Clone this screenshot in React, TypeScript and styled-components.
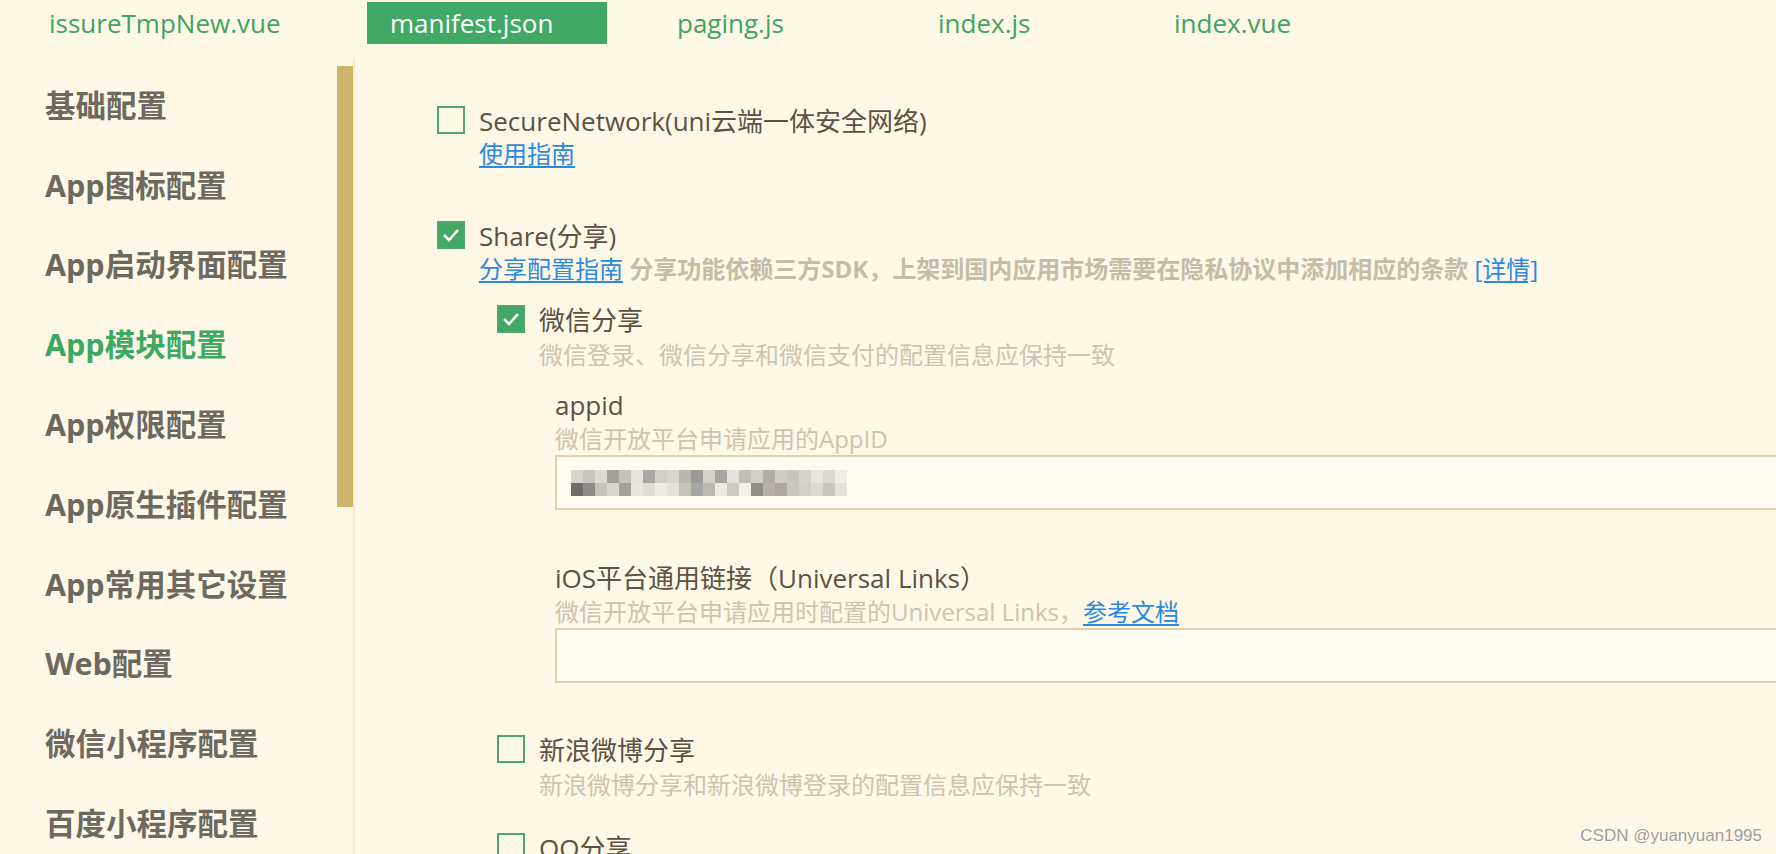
import React from 'react'
import styled, { createGlobalStyle } from 'styled-components'

const GlobalStyle = createGlobalStyle`
  html, body {
    margin: 0;
    padding: 0;
    background: #fff8e6;
  }
  body {
    font-family: 'Open Sans', 'Noto Sans CJK SC', sans-serif;
  }
`

const tabs = [
  { name: 'issureTmpNew.vue', width: 300, space: 41 },
  { name: 'manifest.json', width: 240, space: 47, active: true },
  { name: 'paging.js', width: 240, space: 21 },
  { name: 'index.js', width: 236, space: 0 },
  { name: 'index.vue', width: 240, space: 0 },
]

const menu = [
  '基础配置',
  'App图标配置',
  'App启动界面配置',
  'App模块配置',
  'App权限配置',
  'App原生插件配置',
  'App常用其它设置',
  'Web配置',
  '微信小程序配置',
  '百度小程序配置',
]

// blurred appid, two rows of mosaic cells
const mosaic = [
  ['#d8d5cd', '#c9c6bd', '#dedbd3', '#a3a09a', '#c5c2ba', '#e5e3dc', '#a9a7a2', '#d2cfc7', '#d9d6cf', '#b9b6af', '#9c9a95', '#d6d3cb', '#a6a4a0', '#e3e1da', '#c1beb7', '#d4cfc5', '#b2aea7', '#cfccc5', '#c8c5be', '#d6d3cc', '#e8e5dc', '#ddd9d0', '#f1eee5'],
  ['#6f6d6a', '#8e8b86', '#c6c3bb', '#d9d6ce', '#a5a29d', '#e8e6df', '#dfddd5', '#eeebe3', '#e4e2dc', '#c7c4bc', '#a3a5a6', '#bcb9b2', '#edeae2', '#cdcac2', '#f4f1e8', '#8f8d89', '#b5b2ab', '#b0a89f', '#c9c6bf', '#d3d0c8', '#ddd9d0', '#c8c5be', '#e6e3da'],
]

export default function App() {
  return (
    <Page>
      <GlobalStyle />
      <TabBar>
        {tabs.map((tab) => (
          <Tab key={tab.name} $width={tab.width} $space={tab.space} $active={!!tab.active}>
            {tab.name}
          </Tab>
        ))}
      </TabBar>

      <Main>
        <Sidebar>
          <Nav>
            {menu.map((item) => (
              <NavItem key={item} $active={item === 'App模块配置'}>
                {item}
              </NavItem>
            ))}
          </Nav>
          <ScrollTrack>
            <Thumb />
          </ScrollTrack>
        </Sidebar>

        <Content>
          <Option $space={49}>
            <Checkbox $checked={false} />
            <OptionBody>
              <Label>SecureNetwork(uni云端一体安全网络)</Label>
              <Hint>
                <Link>使用指南</Link>
              </Hint>
            </OptionBody>
          </Option>

          <Option $space={0}>
            <Checkbox $checked>
              <CheckMark />
            </Checkbox>
            <OptionBody>
              <Label>Share(分享)</Label>
              <Hint>
                <Link>分享配置指南</Link> <Notice>分享功能依赖三方SDK，上架到国内应用市场需要在隐私协议中添加相应的条款</Notice>{' '}
                <Link>[详情]</Link>
              </Hint>

              <SubList>
                <Option $space={30}>
                  <Checkbox $checked>
                    <CheckMark />
                  </Checkbox>
                  <OptionBody>
                    <Label>微信分享</Label>
                    <Desc>微信登录、微信分享和微信支付的配置信息应保持一致</Desc>
                    <Fields>
                      <Field>
                        <Label>appid</Label>
                        <FieldHint>微信开放平台申请应用的AppID</FieldHint>
                        <InputBox>
                          <Mosaic />
                        </InputBox>
                      </Field>
                      <Field>
                        <Label>iOS平台通用链接（Universal Links）</Label>
                        <FieldHint>
                          微信开放平台申请应用时配置的Universal Links，<Link>参考文档</Link>
                        </FieldHint>
                        <InputBox />
                      </Field>
                    </Fields>
                  </OptionBody>
                </Option>

                <Option $space={30}>
                  <Checkbox $checked={false} />
                  <OptionBody>
                    <Label>新浪微博分享</Label>
                    <Desc>新浪微博分享和新浪微博登录的配置信息应保持一致</Desc>
                  </OptionBody>
                </Option>

                <Option $space={0}>
                  <Checkbox $checked={false} />
                  <OptionBody>
                    <Label>QQ分享</Label>
                  </OptionBody>
                </Option>
              </SubList>
            </OptionBody>
          </Option>
        </Content>
      </Main>

      <Watermark>CSDN @yuanyuan1995</Watermark>
    </Page>
  )
}

function CheckMark() {
  return (
    <svg width="18" height="14" viewBox="0 0 18 14">
      <polyline points="2,7 7,12 16,2" fill="none" stroke="#fff" strokeWidth="2.6" />
    </svg>
  )
}

function Mosaic() {
  return (
    <svg width="278" height="26" viewBox="0 0 278 26">
      {mosaic.map((row, r) =>
        row.map((color, c) => (
          <rect key={`${r}-${c}`} x={c * 12} y={r * 13} width="12" height="13" fill={color} />
        ))
      )}
    </svg>
  )
}

const Page = styled.div`
  position: relative;
  width: 1776px;
  height: 854px;
  overflow: hidden;
  background: #fff8e6;
`

const TabBar = styled.div`
  display: flex;
  align-items: flex-start;
  height: 58px;
  padding: 2px 0 0 26px;
  box-sizing: border-box;
`

const Tab = styled.div<{ $width: number; $space: number; $active: boolean }>`
  display: flex;
  align-items: center;
  flex-shrink: 0;
  box-sizing: border-box;
  width: ${(p) => p.$width}px;
  margin-right: ${(p) => p.$space}px;
  height: 42px;
  padding-left: 23px;
  font-size: 26px;
  color: ${(p) => (p.$active ? '#ffffff' : '#3ea461')};
  background: ${(p) => (p.$active ? '#42a865' : 'transparent')};
`

const Main = styled.div`
  display: flex;
  height: 796px;
`

const Sidebar = styled.div`
  display: flex;
  flex-shrink: 0;
  width: 355px;
  box-sizing: border-box;
  border-right: 2px solid #f4ebcf;
`

const Nav = styled.div`
  width: 337px;
  padding-top: 6px;
`

const NavItem = styled.div<{ $active: boolean }>`
  display: flex;
  align-items: center;
  height: 79.8px;
  padding-left: 45px;
  font-size: 30.5px;
  font-weight: 700;
  white-space: nowrap;
  color: ${(p) => (p.$active ? '#3ca862' : '#6c6960')};
`

const ScrollTrack = styled.div`
  width: 16px;
  padding-top: 8px;
`

const Thumb = styled.div`
  height: 441px;
  background: #ceb56c;
`

const Content = styled.div`
  flex: 1;
  min-width: 0;
  padding: 46px 0 0 82px;
  overflow: hidden;
`

const Option = styled.div<{ $space: number }>`
  display: flex;
  align-items: flex-start;
  gap: 14px;
  margin-bottom: ${(p) => p.$space}px;
`

const Checkbox = styled.div<{ $checked: boolean }>`
  display: flex;
  align-items: center;
  justify-content: center;
  flex-shrink: 0;
  width: 28px;
  height: 28px;
  margin-top: 2px;
  box-sizing: border-box;
  border: 2px solid #4aa96a;
  background: ${(p) => (p.$checked ? '#43a865' : 'transparent')};
`

const OptionBody = styled.div`
  flex: 1;
  min-width: 0;
`

const Label = styled.div`
  font-size: 26px;
  line-height: 34px;
  color: #5b5243;
  white-space: nowrap;
`

const Hint = styled.div`
  font-size: 24px;
  line-height: 32px;
  white-space: nowrap;
`

const Link = styled.span`
  color: #2a89e2;
  text-decoration: underline;
  text-underline-offset: 3px;
`

const Notice = styled.span`
  color: #c3bca7;
  font-weight: 700;
`

const Desc = styled.div`
  margin-top: 2px;
  font-size: 24px;
  line-height: 32px;
  color: #cbc4b1;
  white-space: nowrap;
`

const SubList = styled.div`
  margin: 18px 0 0 18px;
`

const Fields = styled.div`
  display: flex;
  flex-direction: column;
  gap: 51px;
  margin: 17px 0 0 16px;
  padding-bottom: 20px;
`

const Field = styled.div`
  display: flex;
  flex-direction: column;
`

const FieldHint = styled(Desc)`
  margin-top: 1px;
`

const InputBox = styled.div`
  display: flex;
  align-items: center;
  width: 1400px;
  height: 55px;
  padding-left: 14px;
  box-sizing: border-box;
  border: 2px solid #ddd2aa;
  background: #fffcf2;
`

const Watermark = styled.div`
  position: absolute;
  right: 14px;
  bottom: 8px;
  font-family: 'Liberation Sans', Arial, sans-serif;
  font-size: 17px;
  color: #9d9d9d;
  text-shadow: 0 0 2px #ffffff;
`
